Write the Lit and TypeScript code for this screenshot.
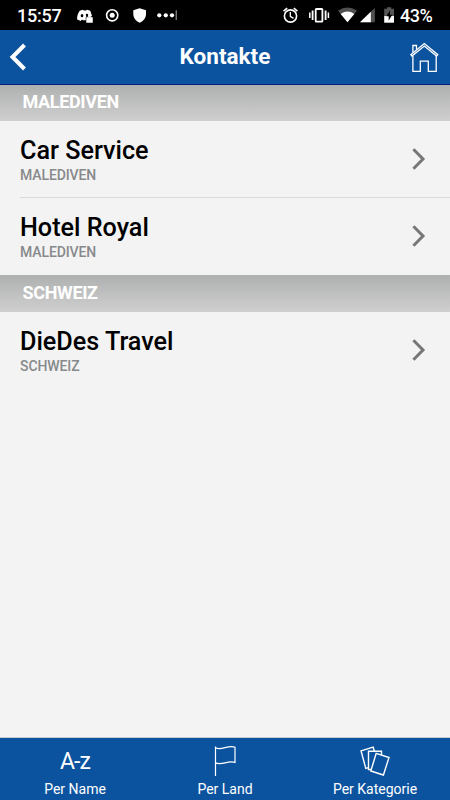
import { LitElement, html, css } from "lit";
import { customElement, property } from "lit/decorators.js";

interface Contact { name: string; country: string; }
const groups: { title: string; items: Contact[] }[] = [
  { title: "MALEDIVEN", items: [
    { name: "Car Service", country: "MALEDIVEN" },
    { name: "Hotel Royal", country: "MALEDIVEN" },
  ] },
  { title: "SCHWEIZ", items: [{ name: "DieDes Travel", country: "SCHWEIZ" }] },
];

@customElement("status-bar")
class StatusBar extends LitElement {
  static styles = css`
    :host { display: flex; align-items: center; height: 30px; background: #000; color: #fff; font-size: 18px; font-weight: 500; line-height: 30px; letter-spacing: -0.25px; }
    .time { margin-left: 17px; width: 60px; padding-top: 2px; height: 30px; box-sizing: border-box; line-height: 28px; }
    .pct { width: 50px; margin-left: 1px; padding-top: 2px; line-height: 28px; height: 30px; box-sizing: border-box; letter-spacing: -0.5px; }
    .right { margin-left: auto; }
    svg { display: block; flex: none; }
  `;
  render() {
    return html`
      <span class="time">15:57</span>
      <svg width="104" height="30" viewBox="77 0 104 30" fill="#fff">
        <path d="M79.7 10.7 82.8 9.7 84 10.5H86L87.2 9.7 90.3 10.7 92 16H86.3V20.2H83L82 19.5 80.8 21 77.2 19.6C76.8 16.3 78 13 79.7 10.7Z"/>
        <ellipse cx="82" cy="15.7" rx="1.3" ry="1.6" fill="#000"/>
        <ellipse cx="87" cy="15" rx="1.2" ry="1.2" fill="#000"/>
        <path d="M86 17H93V23H86Z" stroke="#000" stroke-width=".5"/>
        <path d="M87.8 17.5V16.8Q89.4 15 91.2 16.8V17.5" fill="#fff" stroke="#fff" stroke-width=".7"/>
        <circle cx="112.2" cy="15.3" r="5.6" fill="none" stroke="#fff" stroke-width="1.6"/>
        <circle cx="112.2" cy="15.3" r="2.5"/>
        <path d="M133.3 10.3 139.6 8.2 146 10.3V14C146 18 143.5 21.2 139.6 22.8 135.8 21.2 133.3 18 133.3 14Z"/>
        <circle cx="159.3" cy="15.3" r="2.1"/><circle cx="165.8" cy="15.3" r="2.1"/><circle cx="172" cy="15.3" r="2.1"/>
        <path d="M175.7 10.3H176.7V20H175.7Z" fill="#aaa"/>
      </svg>
      <svg class="right" width="116" height="30" viewBox="283 0 116 30" fill="#fff">
        <g fill="none" stroke="#fff">
          <circle cx="290.5" cy="16" r="6.1" stroke-width="1.6"/>
          <path d="M290.3 12V16.4L293.5 18.4" stroke-width="1.3"/>
          <path d="M283.5 11.2 287.2 8.2M297.4 11.2 293.8 8.2" stroke-width="1.7"/>
          <rect x="315.7" y="9" width="6.7" height="12.6" rx=".7" stroke-width="1.8"/>
          <path d="M312.6 10.5V20M325.6 10.5V20" stroke-width="1.8"/>
          <path d="M309.8 12.5V18M328.4 12.5V18" stroke-width="1.5"/>
        </g>
        <path d="M338 10.8Q347.5 4.4 357 10.8L347.5 22.3Z" fill="#505050"/>
        <path d="M340.7 14Q347.5 9.2 354.3 14L347.5 22.3Z"/>
        <path d="M360 22.3 374.8 8V22.3Z" fill="#505050"/>
        <path d="M360 22.3 370.8 11.8V22.3Z"/>
        <path d="M384.2 8.7H387V7.2H391.2V8.7H394V16H384.2Z" fill="#555"/>
        <path d="M384.2 16H394V22.7H384.2Z"/>
        <path d="M390 10.4 386.3 16.3H388.7V20.7L392.2 14.8H390Z" fill="#000"/>
      </svg>
      <span class="pct">43%</span>`;
  }
}

@customElement("contact-row")
class ContactRow extends LitElement {
  @property() name = "";
  @property() country = "";
  static styles = css`
    :host { display: flex; align-items: flex-start; justify-content: space-between; height: 77px; margin-left: 20px; padding-right: 24px; box-sizing: border-box; }
    .text { padding-top: 15px; }
    .name { font-size: 25.2px; line-height: 30px; font-weight: 500; color: #000; }
    .country { font-size: 14px; line-height: 18px; letter-spacing: -0.1px; font-weight: 500; color: #87898b; }
    svg { display: block; margin-top: 26px; }
  `;
  render() {
    return html`<div class="text"><div class="name">${this.name}</div><div class="country">${this.country}</div></div>
      <svg width="14" height="24" viewBox="0 0 14 24"><path d="M1.4 2.3 11 12 1.4 21.7" fill="none" stroke="#767676" stroke-width="3"/></svg>`;
  }
}

@customElement("app-root")
class AppRoot extends LitElement {
  static styles = css`
    :host { display: flex; flex-direction: column; width: 450px; height: 800px; background: #f3f3f3; font-family: Roboto, sans-serif; overflow: hidden; }
    .bar { height: 55px; box-sizing: border-box; background: #0c539f; border-bottom: 1px solid #071c80; display: grid; grid-template-columns: 60px 1fr 60px; align-items: center; }
    .bar svg { display: block; }
    .title { color: #fff; font-weight: 700; font-size: 22.5px; text-align: center; line-height: 52px; height: 54px; }
    .list { flex: 1; }
    .head { height: 37px; box-sizing: border-box; padding-left: 22.5px; font-size: 18px; letter-spacing: -0.35px; font-weight: 700; line-height: 35px; color: #fff; background: linear-gradient(#aeb0af, #cfcfcf); }
    .head.first { height: 36px; line-height: 34px; }
    .line { border-bottom: 1px solid #d9d9d9; }
    .tabs { height: 63px; box-sizing: border-box; border-top: 1px solid #c5cbd3; background: #0c539f; display: grid; grid-template-columns: repeat(3, 1fr); color: #fff; }
    .tab { display: flex; flex-direction: column; align-items: center; font-size: 14px; line-height: 20px; }
    .icon { height: 41px; display: flex; align-items: center; justify-content: center; }
    .az { font-size: 23px; font-weight: 400; letter-spacing: -0.9px; line-height: 41px; padding-top: 5px; box-sizing: border-box; }
  `;
  render() {
    return html`
      <status-bar></status-bar>
      <header class="bar">
        <svg width="60" height="54" viewBox="0 30 60 54"><path d="M24.5 45 12.5 57 24.5 69" fill="none" stroke="#fff" stroke-width="4"/></svg>
        <div class="title">Kontakte</div>
        <svg width="60" height="54" viewBox="390 30 60 54" fill="none" stroke="#fff" stroke-width="1.3">
          <path d="M410.8 54.7 424.3 43.5 437.8 54.7 436.6 56.1 424.3 46 412 56.1Z"/>
          <path d="M412.9 52.5V45.5H416.5V49.5M412.9 56V71.4H420.3V61.2H428.3V71.4H436.2V56"/>
        </svg>
      </header>
      <main class="list">
        ${groups.map((g, i) => html`
          <div class="head ${i === 0 ? "first" : ""}">${g.title}</div>
          ${g.items.map((c, j) => html`<contact-row class=${j < g.items.length - 1 ? "line" : ""} .name=${c.name} .country=${c.country}></contact-row>`)}
        `)}
      </main>
      <nav class="tabs">
        <div class="tab"><div class="icon az">A-z</div>Per Name</div>
        <div class="tab"><div class="icon">
          <svg width="30" height="41" viewBox="210 738 30 41" fill="none" stroke="#fff" stroke-width="1.2"><path d="M215.5 746.5V776M215.5 747.8C221.5 751 228 744.5 235 747.2V762.5C228 760 221.5 766 215.5 762.8"/></svg>
        </div>Per Land</div>
        <div class="tab"><div class="icon">
          <svg width="34" height="41" viewBox="358 738 34 41" fill="#0c539f" stroke="#fff" stroke-width="1.4">
            <path d="M361 750.8 373.2 747.2 378 764.8 365.8 768.4Z"/><path d="M368.5 751.3H381.5V769.5H368.5Z"/><path d="M376.2 753.3 389 757.5 383.4 775 370.8 771Z"/>
          </svg>
        </div>Per Kategorie</div>
      </nav>`;
  }
}
